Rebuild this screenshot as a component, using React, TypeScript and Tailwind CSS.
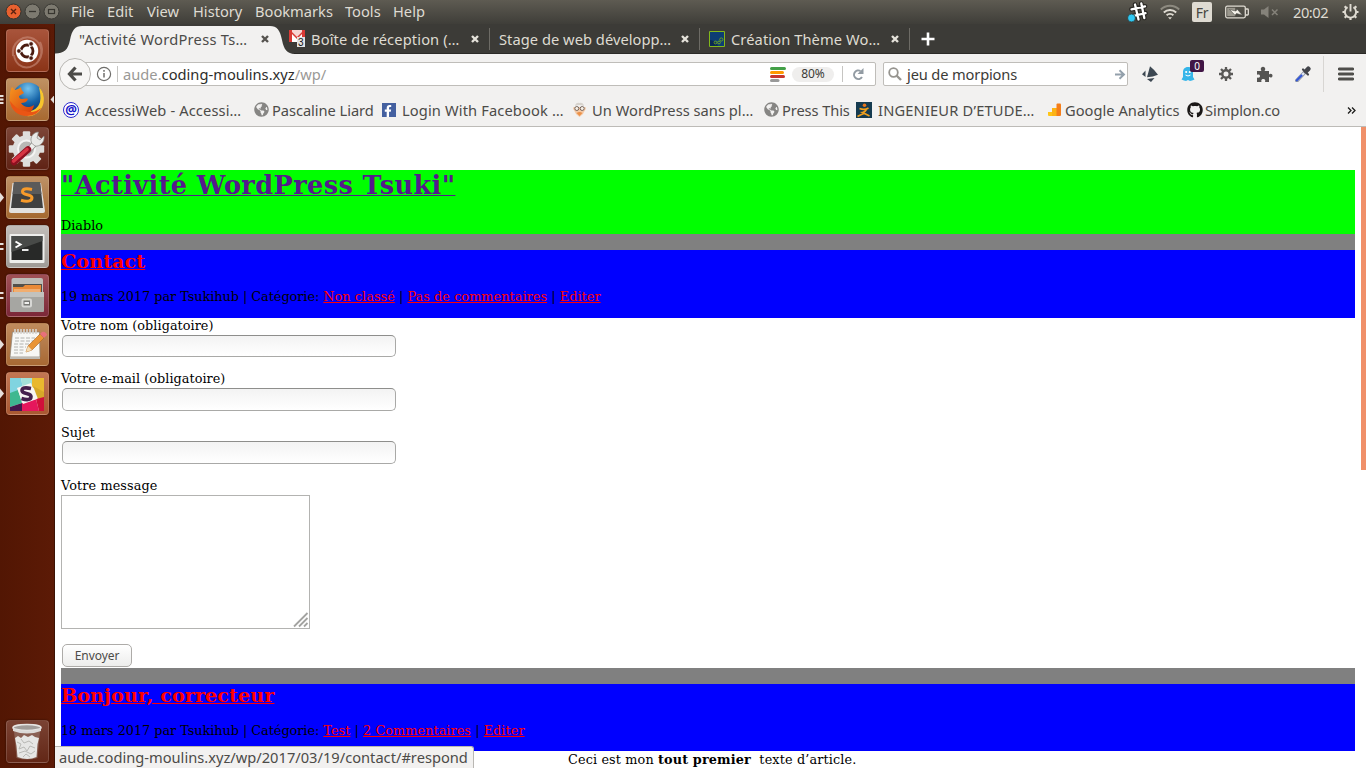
import type { ReactNode } from "react";
import { FaFacebookF, FaGithub, FaGlobeAmericas } from "react-icons/fa";

/* ---------- top panel ---------- */

const menus = [
  { label: "File", cls: "w-[36px]" },
  { label: "Edit", cls: "w-[40px]" },
  { label: "View", cls: "w-[46px]" },
  { label: "History", cls: "w-[62px]" },
  { label: "Bookmarks", cls: "w-[90px]" },
  { label: "Tools", cls: "w-[48px]" },
  { label: "Help", cls: "w-[40px]" },
];

function WindowButtons() {
  return (
    <svg width="62" height="24" viewBox="0 0 62 24" className="shrink-0">
      <circle cx="13.5" cy="11.500" r="7.500" fill="#e9612f" stroke="#35332e" strokeWidth="1" />
      <path d="M11 9l5 5M16 9l-5 5" stroke="#5a2210" strokeWidth="1.400" />
      <circle cx="32.500" cy="11.500" r="7.500" fill="#7d7a70" stroke="#3a3934" strokeWidth="1" />
      <path d="M29 11.500h7" stroke="#37352f" strokeWidth="1.300" />
      <circle cx="51.500" cy="11.500" r="7.500" fill="#7d7a70" stroke="#3a3934" strokeWidth="1" />
      <rect x="48.500" y="9.500" width="6" height="4" fill="none" stroke="#37352f" strokeWidth="1.200" />
    </svg>
  );
}

function Indicators() {
  return (
    <div className="ml-auto flex h-6 items-center text-[#dfdbd2]">
      <svg width="22" height="24" viewBox="0 0 22 24" className="mr-[12px]">
        <path d="M5.500 9.300L19 6.300M7 16l12.500-2.800M9 4.500l3.500 15M15.300 3.500L18.300 18" stroke="#292824" strokeWidth="4.600" strokeLinecap="round" />
        <path d="M5.500 9.300L19 6.300M7 16l12.500-2.800M9 4.500l3.500 15M15.300 3.500L18.300 18" stroke="#fff" strokeWidth="2.300" strokeLinecap="round" />
        <circle cx="5.500" cy="18" r="3.900" fill="#2fc8f2" stroke="#292824" strokeWidth=".6" />
      </svg>
      <svg width="20" height="24" viewBox="0 0 20 24" className="mr-[12px]" fill="none" strokeWidth="1.900">
        <path d="M.8 9.500a13 13 0 0 1 18.400 0" stroke="#8d8a80" />
        <path d="M3.800 12.500a9 9 0 0 1 12.400 0" stroke="#dfdbd2" />
        <path d="M6.600 15.300a5 5 0 0 1 6.800 0" stroke="#dfdbd2" />
        <path d="M8 17.200h4L10 19.500z" fill="#dfdbd2" stroke="none" />
      </svg>
      <div className="mr-[13px] flex h-5 w-5 items-center justify-center rounded-[2px] bg-[#dfdbd2] text-[14px] text-[#474641]">
        <span className="tracking-[-0.3px]">Fr</span>
      </div>
      <svg width="24" height="24" viewBox="0 0 24 24" className="mr-[12px]">
        <rect x=".7" y="6.200" width="19.600" height="11.600" rx="1.500" fill="none" stroke="#dfdbd2" strokeWidth="1.300" />
        <path d="M21 9h1.500q.8 0 .8.800v4.400q0 .8-.8.800H21" fill="none" stroke="#dfdbd2" strokeWidth="1.300" />
        <rect x="2.200" y="7.800" width="8" height="8.400" fill="#9b988e" />
        <path d="M4.500 9.500l6.500 1.500 1-2 5.500 6.200-6-1.700-1.500 1.800z" fill="#f3f0e8" stroke="#4a4944" strokeWidth=".6" />
      </svg>
      <svg width="18" height="24" viewBox="0 0 18 24" className="mr-[14px]">
        <path d="M0 9.500h3L7.500 6v12L3 14.500H0z" fill="#85827a" />
        <path d="M11 9.500l5.500 5.500M16.500 9.500L11 15" stroke="#85827a" strokeWidth="1.500" />
      </svg>
      <span className="-mt-px w-[49px] text-[14.67px] tracking-[-0.45px]">20:02</span>
      <svg width="17" height="24" viewBox="0 0 17 24" className="mr-[7px]">
        <path d="M5.600 7.200a5.600 5.600 0 1 0 5.800 0" fill="none" stroke="#dfdbd2" strokeWidth="1.900" />
        <path
          d="M.5 12h2.500M14 12h2.500M2.700 6.300l1.800 1.800M14.300 6.300l-1.800 1.800M2.700 17.800l1.800-1.800M14.300 17.800l-1.800-1.800M8.500 17.500V20"
          stroke="#dfdbd2"
          strokeWidth="2.200"
        />
        <path d="M8.500 4v7.500" stroke="#dfdbd2" strokeWidth="1.900" />
      </svg>
    </div>
  );
}

function TopPanel() {
  return (
    <header className="flex h-6 items-center bg-linear-to-b from-[#5e5b52] to-[#3f3e39] text-[#dfdbd2]">
      <WindowButtons />
      <nav className="flex pb-[2px] pl-[9px] text-[14.67px] leading-[22px]">
        {menus.map((m) => (
          <span key={m.label} className={`${m.cls} shrink-0 whitespace-nowrap`}>
            {m.label}
          </span>
        ))}
      </nav>
      <Indicators />
    </header>
  );
}

/* ---------- launcher ---------- */

type Pips = "none" | "one" | "two" | "three";

function Tile({ tone, pips = "none", active = false, children }: { tone: string; pips?: Pips; active?: boolean; children: ReactNode }) {
  return (
    <div className="flex h-[43px] w-[54px] items-center">
      <svg width="5.500" height="43" viewBox="0 0 5.5 43" fill="#e6dfdb" className="shrink-0">
        {pips === "one" && <path d="M0 16.500l4 5-4 5z" />}
        {pips === "two" && <path d="M0 18h3.500v2H0zM0 23h3.500v2H0z" />}
        {pips === "three" && <path d="M0 17h3.500v2H0zM0 20.500h3.500v2H0zM0 24h3.500v2H0z" />}
      </svg>
      <div className={`flex h-[43px] w-[43px] shrink-0 items-center justify-center rounded-[4px] border border-white/15 shadow-[0_0_2px_rgba(0,0,0,0.5)] ${tone}`}>
        <svg width="42" height="42" viewBox="0 0 42 42" className="shrink-0">
          {children}
        </svg>
      </div>
      <svg width="5.500" height="43" viewBox="0 0 5.5 43" fill="#e6dfdb" className="shrink-0">
        {active && <path d="M5.500 17v9L1.500 21.500z" />}
      </svg>
    </div>
  );
}

function Launcher() {
  return (
    <aside className="flex w-[55px] shrink-0 flex-col gap-[6px] border-r border-[#3c1204] bg-linear-to-r from-[#521603] to-[#5c1a06] pt-[5px] pb-[5px]">
      <Tile tone="bg-linear-to-b from-[#a8543b] to-[#8b3417]">
        <path d="M7 26C5 12 18 4 28 9c9 5 9 16 4 22M34 12c5 10 0 22-10 25-9 2-15-4-16-12" fill="none" stroke="#c98e7b" strokeWidth="2" opacity=".6" />
        <circle cx="21" cy="21" r="11.200" fill="#fff" />
        <circle cx="21" cy="21" r="6" fill="none" stroke="#4a1b10" strokeWidth="2.800" />
        <path d="M21 21h-9M21 21l5-8M21 21l5 8" stroke="#fff" strokeWidth="1.600" />
        <g fill="#4a1b10" stroke="#fff" strokeWidth=".8">
          <circle cx="12.900" cy="21" r="2.300" />
          <circle cx="25.100" cy="13.900" r="2.300" />
          <circle cx="25.100" cy="28.100" r="2.300" />
        </g>
      </Tile>
      <Tile tone="bg-linear-to-b from-[#bf9163] to-[#a86930]" pips="three" active>
        <defs>
          <radialGradient id="globe" cx=".5" cy=".2" r=".8">
            <stop offset="0" stopColor="#75c3ee" />
            <stop offset=".55" stopColor="#1765a8" />
            <stop offset="1" stopColor="#0a2f6c" />
          </radialGradient>
          <linearGradient id="fox" x1="0" y1="0" x2="1" y2="1">
            <stop offset="0" stopColor="#f7951f" />
            <stop offset="1" stopColor="#d5380b" />
          </linearGradient>
        </defs>
        <circle cx="22" cy="19" r="15.500" fill="url(#globe)" />
        <path d="M33 8c5 5 6 12 4 18-3 8-10 12-17 11l-3-5c8 2 15-2 17-9 1-5 0-10-1-15z" fill="#f8c52c" />
        <path d="M4 15c0-3 1-5 2-7l3 3c2-1 4-1 6-3 0 3 2 4 3 6l-5 3c0 2 1 3 3 3 2 0 4-1 6 0-1 3-4 4-7 4 3 5 9 5 13 2-1 6-5 10-10 10C7 35 2 25 4 15z" fill="url(#fox)" />
        <path d="M4 22c1 9 8 15 17 15 6 0 12-3 14-8-5 4-10 5-16 3-7-1-11-5-15-10z" fill="#ea5514" />
      </Tile>
      <Tile tone="bg-linear-to-b from-[#7c4537] to-[#602315]">
        <g fill="#dededc">
          <circle cx="20.500" cy="21" r="13.800" />
          {[0, 45, 90, 135, 180, 225, 270, 315].map((a) => (
            <rect key={a} x="16.800" y="3.300" width="7.400" height="7" rx="1" transform={`rotate(${a} 20.500 21)`} />
          ))}
        </g>
        <circle cx="20.500" cy="21" r="8.500" fill="#b9b9b6" stroke="#f4f4f3" strokeWidth="2" />
        <path d="M20 25L31 13" stroke="#8f8f8b" strokeWidth="6" />
        <path d="M20 25L31 13" stroke="#efefed" strokeWidth="4.400" />
        <path d="M25.500 15c-2-6 2-11 7-11l-1.500 6 3 2 4-4c1 6-4 11-9 10z" fill="#e9e9e7" stroke="#898985" strokeWidth=".7" />
        <path d="M8 34L22 21.500" stroke="#8e1020" strokeWidth="6.500" strokeLinecap="round" />
        <path d="M7.700 33L21 21.500" stroke="#d73443" strokeWidth="3.600" strokeLinecap="round" />
      </Tile>
      <Tile tone="bg-linear-to-b from-[#bd9166] to-[#a4682f]" pips="one">
        <path d="M6.500 6h28.500l4 28q0 2-2 2H5q-2 0-2-2z" fill="#e2e1df" />
        <path d="M8 5h26l3 26H5z" fill="#404040" />
        <path d="M8 5h26l1.500 12H6.500z" fill="#5a5a5a" />
        <path d="M26 12.500q-9.500-2-9.500 2.300c0 4 9.500 2 9.500 6 0 4-6 4-11 2.500" fill="none" stroke="#f79a2a" strokeWidth="3" />
      </Tile>
      <Tile tone="bg-linear-to-b from-[#c2bdb9] to-[#9f9b97]" pips="two">
        <rect x="3.500" y="8" width="35" height="29" rx="1" fill="#eeeeec" />
        <rect x="5.500" y="10" width="31" height="24" fill="#282928" />
        <path d="M5.500 10h31v5L5.500 26z" fill="#484a48" />
        <path d="M9.500 15.500l5 3-5 3" fill="none" stroke="#fff" strokeWidth="2" />
        <path d="M16 24h6.500" stroke="#fff" strokeWidth="1.800" />
      </Tile>
      <Tile tone="bg-linear-to-b from-[#a05055] to-[#7b2738]" pips="two">
        <path d="M5.500 5q0-2 2-2h27.500q2 0 2 2v12H5.500z" fill="#bdbdb8" />
        <path d="M7 9h29v9H7z" fill="#53504b" />
        <path d="M7 12h10l2-2h16v8H7z" fill="#e98a38" />
        <path d="M8 14h26v3H8z" fill="#f1ae70" />
        <path d="M4 17h34v19q0 1-1 1H5q-1 0-1-1z" fill="#a6a6a2" />
        <path d="M4 17H38v5H4z" fill="#c2c2be" />
        <rect x="15.500" y="23.500" width="10.500" height="9" rx="2" fill="#d7d7d4" />
        <rect x="17.500" y="25.500" width="6.500" height="5" fill="#777773" />
        <path d="M18.500 27h4.500v2h-4.500z" fill="#efefed" />
      </Tile>
      <Tile tone="bg-linear-to-b from-[#c08b5d] to-[#a86934]" pips="one">
        <path d="M6.500 8h27l.5 25H4z" fill="#f7f7f5" stroke="#8a8276" strokeWidth=".7" />
        <path d="M4 33h30v2H4z" fill="#bdbab4" />
        <path d="M9 5v5M12 5v5M15 5v5M18 5v5M21 5v5M24 5v5M27 5v5M30 5v5" stroke="#d6d4d0" strokeWidth="1.600" />
        <path d="M9 14h20M9 17h18M8 20h15M8 23h12M8 26h11M8 29h9" stroke="#a9a9a7" strokeWidth=".9" strokeDasharray="4 1.500" />
        <path d="M20 28l2-6L34 10l4 4-12 12z" fill="#e99435" stroke="#a9611c" strokeWidth=".6" />
        <path d="M34 10l2-2q2-1 4 1t0 3l-2 2z" fill="#e8707a" />
        <path d="M20 28l2-6 4 4z" fill="#f4ddb5" />
      </Tile>
      <Tile tone="bg-linear-to-b from-[#c27653] to-[#a95932]" pips="one">
        <path d="M4 5h34v33H4z" fill="#f4f2ed" />
        <path d="M4 5h11l2 11-13 5z" fill="#80d4e0" />
        <path d="M15 5h11v8l-9 3z" fill="#a3e0d8" />
        <path d="M26 5h12v15l-12-6z" fill="#e9b82e" />
        <path d="M27 13l11 6v6l-6 1z" fill="#d7a828" />
        <path d="M4 20l8-3 4 13-12 4z" fill="#3eb890" />
        <path d="M4 34l12-4 1 8H4z" fill="#44184a" />
        <path d="M16 30l14-4 3 12H16z" fill="#e5175c" />
        <path d="M30 26l8-2v14h-5z" fill="#d0103a" />
        <path d="M11 15l14-5 6 16-14 5z" fill="#f7f5f2" />
        <path d="M25 15.500q-9-2-9 2c0 4 9 2 9 6 0 4-5 3.500-9.500 2" fill="none" stroke="#44204c" strokeWidth="3.600" />
      </Tile>
      <div className="mt-auto">
        <Tile tone="bg-linear-to-b from-[#7a4233] to-[#632716]">
          <path d="M8 10h26l-2.500 27q-10.500 3-21 0z" fill="#a2877e" opacity=".5" />
          <path d="M9 17l3-2 3 2 3-3 4 2 4-2 3 2 4 1-1.500 6-1 13q-9 4-19 0L10.500 25z" fill="#e6e6e4" />
          <path d="M11 21l4 2-2 5 5-2 3 4 3-5 5 2M15 18l3 4 5-2 4 3M13 32l6-2 6 3 4-3M17 36l3-3 4 3" fill="none" stroke="#b9b9b5" strokeWidth="1" />
          <ellipse cx="21" cy="6.500" rx="14" ry="3" fill="#a19c99" stroke="#e6e4e2" strokeWidth="1.600" />
          <path d="M7 7.500v2.500q14 5 28 0V7.500q-14 4.500-28 0z" fill="#dcdad8" />
        </Tile>
      </div>
    </aside>
  );
}

/* ---------- browser chrome ---------- */

function Close({ dark = false }: { dark?: boolean }) {
  return (
    <svg width="8" height="8" viewBox="0 0 8 8" className="shrink-0">
      <path d="M1 1l6 6M7 1L1 7" stroke={dark ? "#55534f" : "#e5e2da"} strokeWidth="2.400" />
    </svg>
  );
}

function TabStrip() {
  return (
    <div className="relative h-[30px] shrink-0 border-b border-[#2b2a27] bg-[#3c3b37]">
      <svg width="240" height="30" viewBox="0 0 240 30" className="absolute top-0 left-0">
        <path d="M0 30V29.500C9 29.500 13 26 15 16 17 6 20 2 27 2H215C222 2 225 6 227 16 229 26 232 29.500 240 30z" fill="#f2f1f0" />
      </svg>
      <div className="relative flex h-full items-center pl-[14px] text-[14.67px] leading-5 text-[#dfdbd2]">
        <div className="flex w-[210px] items-center pl-[10px] text-[#4c4b48]">
          <span className="w-[182px] whitespace-nowrap tracking-[0.25px]">"Activité WordPress Ts…</span>
          <Close dark />
        </div>
        <div className="flex h-[22px] w-[211px] items-center border-r border-[#6d6b65] pl-[10px]">
          <svg width="16" height="17" viewBox="0 0 16 17" className="mr-[6px] shrink-0">
            <path d="M0 0h16v12H0z" fill="#d93a35" />
            <path d="M3 0h10v2L8 7 3 2z" fill="#f6d6d4" />
            <path d="M3 4l5 5 5-5v8H3z" fill="#fff" />
            <rect x="8" y="7" width="8" height="10" fill="#e3e3e3" />
            <text x="9" y="16" fontSize="10" fill="#111" fontFamily="Liberation Sans, sans-serif">3</text>
          </svg>
          <span className="w-[160px] whitespace-nowrap tracking-[0.13px]">Boîte de réception (…</span>
          <Close />
        </div>
        <div className="flex h-[22px] w-[210px] items-center border-r border-[#6d6b65] pl-[9px]">
          <span className="w-[182px] whitespace-nowrap tracking-[0.04px]">Stage de web développ…</span>
          <Close />
        </div>
        <div className="flex h-[22px] w-[210px] items-center border-r border-[#6d6b65] pl-[9px]">
          <svg width="16" height="16" viewBox="0 0 16 16" className="mr-[6px] shrink-0">
            <path d="M.5.5h15v15H.5z" fill="#0d3d73" stroke="#83b81a" />
            <path d="M1 9q5 0 8 6H1z" fill="#0a2853" />
            <g fill="none" stroke="#6fa51c" strokeWidth=".9">
              <circle cx="6.500" cy="11.500" r="1.400" />
              <circle cx="10" cy="11.500" r="1.400" />
              <circle cx="12.300" cy="8.500" r="1.600" />
            </g>
          </svg>
          <span className="w-[160px] whitespace-nowrap tracking-[0.1px]">Création Thème Wo…</span>
          <Close />
        </div>
        <svg width="14" height="14" viewBox="0 0 14 14" className="ml-[11px]">
          <path d="M7 .5v13M.5 7h13" stroke="#fff" strokeWidth="2.600" />
        </svg>
      </div>
    </div>
  );
}

function NavBar() {
  return (
    <div className="flex h-[40px] shrink-0 items-center">
      <div className="z-10 ml-1 flex h-8 w-8 shrink-0 items-center justify-center rounded-full border border-[#b9b7b3] bg-[#f7f6f5]">
        <svg width="16" height="16" viewBox="0 0 16 16">
          <path d="M8.500 1.500L2.500 8l6 6.500M3 8h12" fill="none" stroke="#4c4b48" strokeWidth="3.200" />
        </svg>
      </div>
      <div className="-ml-[8px] flex h-6 w-[793px] items-center rounded-r-[2px] border border-[#bfbdb9] bg-white pl-[12px]">
        <svg width="16" height="16" viewBox="0 0 16 16" className="shrink-0">
          <circle cx="8" cy="8" r="6.600" fill="none" stroke="#6f6e6b" strokeWidth="1.200" />
          <path d="M8 7v4.500M8 4v1.700" stroke="#6f6e6b" strokeWidth="1.500" />
        </svg>
        <span className="mr-[5px] ml-[5px] h-4 w-px shrink-0 bg-[#c6c5c2]" />
        <span className="w-[647px] whitespace-nowrap text-[14.67px] tracking-[0.02px] text-[#9a9996]">
          aude.<span className="text-[#2e2d2b]">coding-moulins.xyz</span>/wp/
        </span>
        <svg width="16" height="15" viewBox="0 0 16 15" className="shrink-0">
          <g strokeWidth="3" strokeLinecap="round">
            <path d="M1.500 1.500h13" stroke="#43a047" />
            <path d="M1.500 5.500h11" stroke="#ff9800" />
            <path d="M1.500 9.500h12" stroke="#c8362e" />
            <path d="M1.500 13.500h6.500" stroke="#999" />
          </g>
        </svg>
        <span className="ml-[6px] flex h-[15px] w-[42px] shrink-0 items-center justify-center rounded-full bg-[#efeeed] text-[12px] tracking-[-0.1px] text-[#3c3b37]">80%</span>
        <span className="ml-[8px] h-4 w-px shrink-0 bg-[#c6c5c2]" />
        <svg width="12" height="13" viewBox="0 0 12 13" className="ml-[9px] shrink-0">
          <path d="M8.500 3A4.300 4.300 0 1 0 10 9" fill="none" stroke="#929ba3" strokeWidth="2" />
          <path d="M11.500 0v6H5.500z" fill="#929ba3" />
        </svg>
      </div>
      <div className="ml-[7px] flex h-6 w-[245px] shrink-0 items-center rounded-[2px] border border-[#bfbdb9] bg-white pl-[4px]">
        <svg width="14" height="14" viewBox="0 0 14 14" className="shrink-0">
          <circle cx="5.500" cy="5.500" r="4.300" fill="none" stroke="#96948f" strokeWidth="1.800" />
          <path d="M8.500 8.500l4.500 4.500" stroke="#96948f" strokeWidth="2.400" />
        </svg>
        <span className="ml-[5px] w-[208px] whitespace-nowrap text-[14.67px] tracking-[-0.15px] text-[#3c3b37]">jeu de morpions</span>
        <svg width="11" height="11" viewBox="0 0 11 11" className="shrink-0">
          <path d="M0 5.500h8.500M4.500 1.200L9 5.500 4.500 9.800" fill="none" stroke="#93a0ab" strokeWidth="1.900" />
        </svg>
      </div>
      <svg width="18" height="16" viewBox="0 0 18 16" className="ml-[13px] shrink-0" fill="#3d4852">
        <path d="M9 .3q4.500 3.500 8 8.500-5 2-11 2.500Q7.500 6 9 .3z" />
        <path d="M4.500 4.500v6.500L1 8.200zM6 13l7.500-1-3.500 4z" />
      </svg>
      <div className="relative ml-[22px] h-4 w-[14px] shrink-0">
        <svg width="14" height="16" viewBox="0 0 14 16">
          <path d="M7 1C3.500 1 2 3.500 2 6v5l-1.500 2.500 2.500 1 2 .5 2-1 2 1 2-.5 2.500-1L12 11V6c0-2.500-1.500-5-5-5z" fill="#35b5e9" />
          <circle cx="5.200" cy="6" r="1.100" fill="#fff" />
          <circle cx="8.800" cy="6" r="1.100" fill="#fff" />
          <path d="M4.500 9q2.500 2 5 0" fill="none" stroke="#fff" />
        </svg>
        <span className="absolute -top-[6px] left-[9px] flex h-[12px] w-[14px] items-center justify-center rounded-[2px] bg-[#411545] text-[10px] leading-none text-white">0</span>
      </div>
      <svg width="14" height="14" viewBox="0 0 14 14" className="ml-[24px] shrink-0" stroke="#5a5957">
        <circle cx="7" cy="7" r="3.700" fill="none" strokeWidth="2.400" />
        <path d="M7 0v3M7 11v3M0 7h3M11 7h3M2 2l2.200 2.200M9.800 9.800L12 12M12 2L9.800 4.200M4.200 9.800L2 12" strokeWidth="2.300" />
      </svg>
      <svg width="17" height="17" viewBox="0 0 17 17" className="ml-[23px] shrink-0" fill="#555452">
        <path d="M1 5h4.500C4 3 5 .8 7 .8S10 3 8.500 5H13v3.500c1.500-1.300 3.500-.6 3.500 1.200S14.500 12 13 10.800V16H9c.8-2-.3-3-1.700-3s-2.500 1-1.800 3H1v-4.500c2 .8 3-.3 3-1.500S3 8 1 8.700z" />
      </svg>
      <svg width="16" height="16" viewBox="0 0 16 16" className="ml-[22px] shrink-0">
        <path d="M2 14.500L10 6" stroke="#8d94a3" strokeWidth="3.800" strokeLinecap="round" />
        <path d="M2 14.300L9 7" stroke="#e7ebf4" strokeWidth="2" />
        <path d="M1.800 14.300L6.500 9.500" stroke="#3356d6" strokeWidth="2.200" strokeLinecap="round" />
        <path d="M8 3.500l5 5" stroke="#43454b" strokeWidth="2.200" strokeLinecap="round" />
        <path d="M11.200 5L13.300 2.800" stroke="#43454b" strokeWidth="4.600" strokeLinecap="round" />
      </svg>
      <span className="ml-[12px] h-9 w-px shrink-0 bg-[#d8d6d3]" />
      <svg width="16" height="14" viewBox="0 0 16 14" className="ml-[14px] shrink-0">
        <path d="M1.200 2h13.600M1.200 7h13.600M1.200 12h13.600" stroke="#4f4e4b" strokeWidth="2.800" strokeLinecap="round" />
      </svg>
    </div>
  );
}

const globe = <FaGlobeAmericas size={15} className="text-[#868583]" />;

const bookmarks: { icon: ReactNode; label: string; box: string; gap: string; track: string }[] = [
  {
    icon: <span className="flex h-4 w-4 items-center justify-center rounded-full border border-[#2a2ad0] bg-white text-[13px] leading-none font-bold text-[#1414c8]">@</span>,
    label: "AccessiWeb - Accessi…",
    box: "w-[191px]",
    gap: "w-[22px]",
    track: "tracking-[0.13px]",
  },
  { icon: globe, label: "Pascaline Liard", box: "w-[128px]", gap: "w-[18px]", track: "tracking-[-0.05px]" },
  {
    icon: (
      <span className="flex h-[14px] w-[14px] items-end justify-end bg-[#4460a0] pr-[2px]">
        <FaFacebookF size={12} className="text-white" />
      </span>
    ),
    label: "Login With Facebook …",
    box: "w-[190px]",
    gap: "w-[20px]",
    track: "tracking-[0.13px]",
  },
  {
    icon: (
      <svg width="15" height="15" viewBox="0 0 15 15">
        <path d="M1 6q0-1 2-1h9q2 0 2 1t-2 4l-1 2-3.500 3L4 12 3 10Q1 7 1 6z" fill="#f4c9a6" />
        <path d="M3 4q1-4 4.500-3 3.500-1 4.500 3-4.500-2-9 0z" fill="#d7d3cd" />
        <circle cx="4.800" cy="6.500" r="2" fill="#f6f0e8" stroke="#6b5b52" strokeWidth=".9" />
        <circle cx="10.200" cy="6.500" r="2" fill="#f6f0e8" stroke="#6b5b52" strokeWidth=".9" />
        <path d="M4.500 11q3-2 6 0l-3 3z" fill="#ec9148" />
      </svg>
    ),
    label: "Un WordPress sans pl…",
    box: "w-[191px]",
    gap: "w-[20px]",
    track: "tracking-[0.02px]",
  },
  { icon: globe, label: "Press This", box: "w-[93px]", gap: "w-[18px]", track: "tracking-[-0.1px]" },
  {
    icon: (
      <svg width="16" height="16" viewBox="0 0 16 16">
        <path d="M0 0h16v16H0z" fill="#163b50" />
        <circle cx="8.500" cy="3.300" r="1.800" fill="#e8761e" />
        <path d="M3.500 6.500q5 2 9-.5M10.500 7q-1 3-4 3.500l7 3.500M8 11.500q-3 1-6.500 3" fill="none" stroke="#f0a01e" strokeWidth="1.700" />
      </svg>
    ),
    label: "INGENIEUR D’ETUDE…",
    box: "w-[192px]",
    gap: "w-[22px]",
    track: "tracking-[0.17px]",
  },
  {
    icon: (
      <svg width="14" height="14" viewBox="0 0 14 14">
        <path d="M0 9h5v4H1q-1 0-1-1z" fill="#ffc517" />
        <path d="M4 5h5v8H4z" fill="#fcb316" />
        <path d="M8.500 1.500q0-1 1-1H12q1 0 1 1V12q0 1-1 1H8.500z" fill="#f57e1a" />
      </svg>
    ),
    label: "Google Analytics",
    box: "w-[138px]",
    gap: "w-[17px]",
    track: "tracking-[0.02px]",
  },
  { icon: <FaGithub size={16} className="text-[#1b1817]" />, label: "Simplon.co", box: "w-[97px]", gap: "w-[18px]", track: "tracking-[-0.1px]" },
];

function BookmarksBar() {
  return (
    <div className="flex h-[33px] shrink-0 items-center border-b border-[#bdbbb7] pb-px pl-[8px] text-[14.67px] leading-5 text-[#4c4b48]">
      {bookmarks.map((b, i) => (
        <div key={b.label} className={`flex shrink-0 items-center ${b.box} ${i === 4 || i === 7 ? "pl-px" : ""}`}>
          <span className={`flex shrink-0 ${b.gap}`}>{b.icon}</span>
          <span className={`whitespace-nowrap ${b.track}`}>{b.label}</span>
        </div>
      ))}
      <svg width="9" height="7" viewBox="0 0 9 7" className="mt-px ml-[64px] shrink-0">
        <path d="M1 .5l3 3-3 3M5 .5l3 3-3 3" fill="none" stroke="#1d1d1b" strokeWidth="1.300" />
      </svg>
    </div>
  );
}

/* ---------- page ---------- */

function PostHeader({ title, date, category, comments, box }: { title: string; date: string; category: string; comments: string; box: string }) {
  return (
    <div className={`bg-[#0000ff] ${box}`}>
      <h2 className="h-[39px] text-[19.2px] leading-[23px] font-bold tracking-[0.05px] text-[#ff0000] underline">{title}</h2>
      <p className="leading-4">
        <span className="tracking-[-0.02px]">{date} par Tsukihub | Catégorie: </span>
        <span className="tracking-[0.07px]">
          <a className="text-[#ff0000] underline">{category}</a> | <a className="text-[#ff0000] underline">{comments}</a> |{" "}
          <a className="text-[#ff0000] underline">Editer</a>
        </span>
      </p>
    </div>
  );
}

function Field({ label, box, input }: { label: string; box: string; input: string }) {
  return (
    <label className={`block tracking-[0.05px] ${box}`}>
      <span className="block h-[17px] leading-4">{label}</span>
      <input className={`ml-px block w-[334px] rounded-[5px] border border-[#a9a9a7] border-t-[#8e8e8c] bg-linear-to-b from-[#f3f3f3] to-white outline-none ${input}`} />
    </label>
  );
}

function Page() {
  return (
    <main className="flex min-h-0 flex-1 overflow-hidden bg-white font-['DejaVu_Serif',serif] text-[12.8px] text-black">
      <div className="min-w-0 flex-1 pt-[43px] pr-[6px] pl-[6px]">
        <div className="h-[64px] bg-[#00ff00]">
          <h1 className="h-[48px] text-[25.6px] leading-[30px] font-bold tracking-[0.39px] text-[#551a8b] underline decoration-1">"Activité WordPress Tsuki"</h1>
          <p className="leading-4">Diablo</p>
        </div>
        <div className="h-4 bg-[#808080]" />
        <PostHeader title="Contact" date="19 mars 2017" category="Non classé" comments="Pas de commentaires" box="h-[68px]" />
        <Field label="Votre nom (obligatoire)" box="h-[53px]" input="h-[22px]" />
        <Field label="Votre e-mail (obligatoire)" box="h-[54px]" input="h-[23px]" />
        <Field label="Sujet" box="h-[53px]" input="-mt-px h-[23px]" />
        <span className="block h-[17px] leading-4 tracking-[0.12px]">Votre message</span>
        <div className="flex h-[134px] w-[249px] items-end justify-end border border-[#b3b3b1]">
          <svg width="16" height="16" viewBox="0 0 16 16">
            <path d="M1 14.500L14.500 1M6 14.500L14.500 6M11 14.500l3.500-3.500" stroke="#a3a3a1" strokeWidth="1.800" />
          </svg>
        </div>
        <button className="mt-[15px] ml-px flex h-[23px] w-[70px] items-center justify-center rounded-[5px] border border-[#adaba8] bg-linear-to-b from-white to-[#ededec] font-['Noto_Sans',sans-serif] text-[12px] tracking-[-0.05px] text-[#4c4b48]">
          Envoyer
        </button>
        <div className="mt-px h-4 bg-[#808080]" />
        <PostHeader title="Bonjour, correcteur" date="18 mars 2017" category="Test" comments="2 Commentaires" box="h-[67px]" />
        <p className="mt-px pl-[507px] leading-4 tracking-[0.14px] whitespace-pre">
          Ceci est mon <b>tout premier</b>
          {"  "}texte d’article.
        </p>
      </div>
      <div className="h-[343px] w-[5px] bg-[#f09069]" />
    </main>
  );
}

export default function App() {
  return (
    <div className="flex h-[768px] w-[1366px] flex-col overflow-hidden bg-[#f2f1f0] font-['Noto_Sans',sans-serif]">
      <TopPanel />
      <div className="flex min-h-0 flex-1">
        <Launcher />
        <section className="relative flex min-w-0 flex-1 flex-col">
          <TabStrip />
          <NavBar />
          <BookmarksBar />
          <Page />
          <div className="absolute bottom-0 left-0 flex h-[22px] w-[419px] items-center rounded-tr-[3px] border-t border-r border-[#b9b7b3] bg-[#f2f1f0] pb-px pl-[4px] text-[14.67px] whitespace-nowrap text-[#4c4b48]">
            <span>aude.coding-moulins.xyz/wp/2017/03/19/contact/#respond</span>
          </div>
        </section>
      </div>
    </div>
  );
}
